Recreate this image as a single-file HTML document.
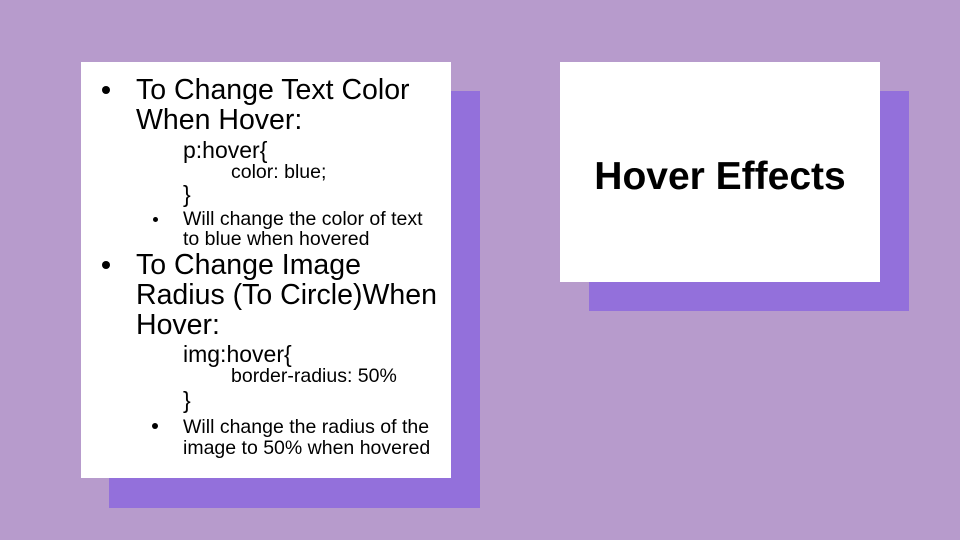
<!DOCTYPE html>
<html><head><meta charset="utf-8"><style>
body{margin:0;width:960px;height:540px;background:#b79bcc;position:relative;overflow:hidden;font-family:"Liberation Sans",sans-serif;color:#000}
.b{position:absolute}
.t{position:absolute;white-space:nowrap;line-height:30px}
.bl{position:absolute;width:8px;height:8px;border-radius:50%;background:#000}
.bs{position:absolute;width:5px;height:5px;border-radius:50%;background:#000}
</style></head><body>
<div class="b" style="left:109px;top:91px;width:371px;height:417px;background:#9370db"></div>
<div class="b" style="left:81px;top:62px;width:370px;height:416px;background:#fff"></div>
<div class="b" style="left:589px;top:91px;width:320px;height:220px;background:#9370db"></div>
<div class="b" style="left:560px;top:62px;width:320px;height:220px;background:#fff"></div>
<div class="t" style="left:560px;width:320px;text-align:center;top:156px;line-height:42px;font-size:39px;font-weight:bold">Hover Effects</div>

<div class="bl" style="left:102px;top:86px"></div>
<div class="t" style="left:136px;top:75px;font-size:28.5px">To Change Text Color</div>
<div class="t" style="left:136px;top:105px;font-size:28.5px">When Hover:</div>
<div class="t" style="left:183px;top:135px;font-size:23px">p:hover{</div>
<div class="t" style="left:231px;top:157px;font-size:19.5px">color: blue;</div>
<div class="t" style="left:183px;top:179px;font-size:23px">}</div>
<div class="bs" style="left:153px;top:217px"></div>
<div class="t" style="left:183px;top:204px;font-size:19.5px">Will change the color of text</div>
<div class="t" style="left:183px;top:224px;font-size:19.5px">to blue when hovered</div>
<div class="bl" style="left:102px;top:261px"></div>
<div class="t" style="left:136px;top:250px;font-size:28.5px">To Change Image</div>
<div class="t" style="left:136px;top:280px;font-size:28.5px">Radius (To Circle)When</div>
<div class="t" style="left:136px;top:310px;font-size:28.5px">Hover:</div>
<div class="t" style="left:183px;top:339px;font-size:23px">img:hover{</div>
<div class="t" style="left:231px;top:361px;font-size:19.5px">border-radius: 50%</div>
<div class="t" style="left:183px;top:385px;font-size:23px">}</div>
<div class="bl" style="left:152px;top:423px;width:6px;height:6px"></div>
<div class="t" style="left:183px;top:412px;font-size:19.5px">Will change the radius of the</div>
<div class="t" style="left:183px;top:433px;font-size:19.5px">image to 50% when hovered</div>
</body></html>
